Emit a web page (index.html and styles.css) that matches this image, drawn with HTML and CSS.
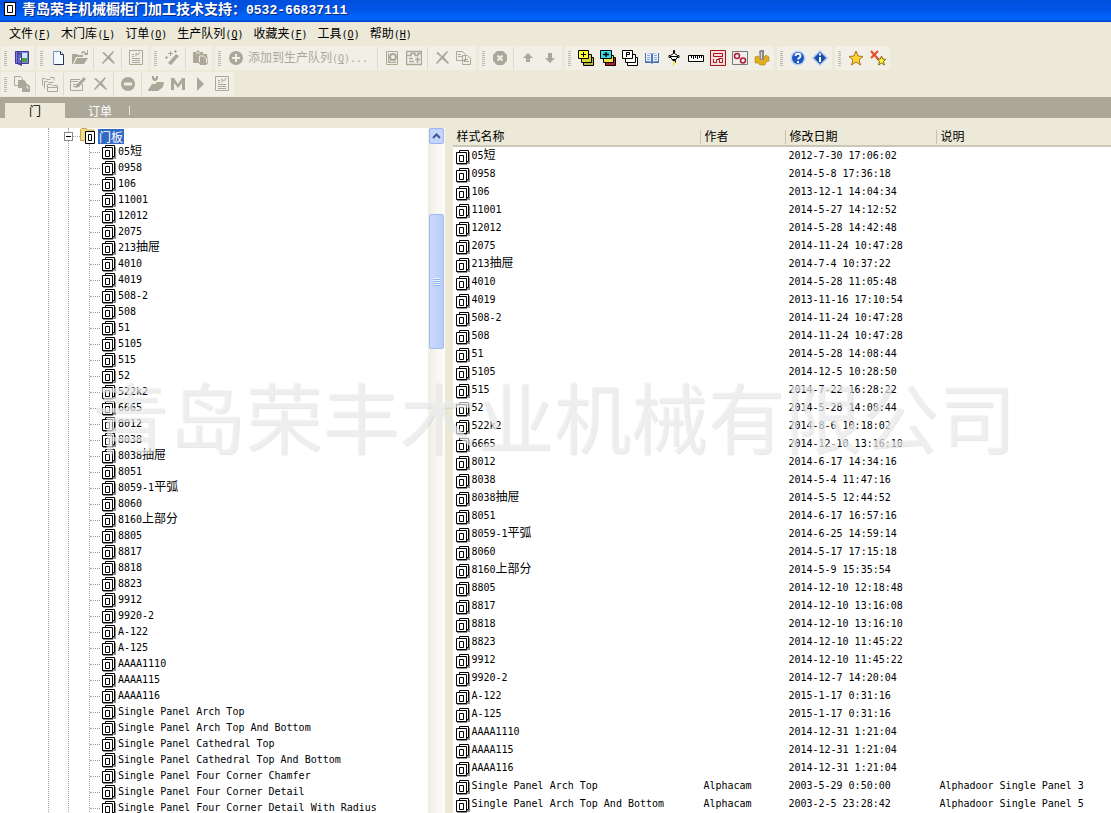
FILE: index.html
```html
<!DOCTYPE html>
<html lang="zh-CN">
<head>
<meta charset="utf-8">
<title>青岛荣丰机械橱柜门加工技术支持</title>
<link rel="stylesheet" href="styles.css">
</head>
<body>
<svg class="sprite" aria-hidden="true">
  <symbol id="panel" viewBox="0 0 14 16">
    <path d="M13 3h1v12h-3v1H1v-1h9v-2h3z" fill="#8c8c8c"/>
    <path d="M3.500 1.500h9v11h-9z" fill="#fff" stroke="#000"/>
    <path d="M.5 3.500h10v11H.500z" fill="#fff" stroke="#000"/><path d="M3.500 6.500h4v6h-4z" fill="#fff" stroke="#000"/>
  </symbol>
  <symbol id="folder" viewBox="0 0 16 16">
    <path d="M.5 12.500v-11l1-1h5l1 1.500h6.500v11z" fill="#f3dc8c" stroke="#c9a64c"/>
    <path d="M5.500 3.500h9v12h-9z" fill="#fff" stroke="#000"/><path d="M8.500 6.500h3v6h-3z" fill="#fff" stroke="#000"/>
  </symbol>
  <symbol id="exit" viewBox="0 0 16 16"><path d="M1.500 1.500h13v12h-13z" fill="#7f86d8" stroke="#3c3a96"/><path d="M8 3h5v9H8z" fill="#c9e8f8"/><path d="M8 8h5v4H8z" fill="#4da23a"/><path d="M3 2l5 1v13l-5-2z" fill="#4540a0"/><path d="M4 4l3 .5v9L4 12.500z" fill="#6a66c8"/><path d="M6 8h1v2H6z" fill="#fff"/></symbol>
  <symbol id="new" viewBox="0 0 16 16"><path d="M3.500 1.500h7l3 3v10h-10z" fill="#f5faff" stroke="#7090bd"/><path d="M10.500 1.500v3h3M13.500 5v9.500h-9" fill="none" stroke="#27364f"/></symbol>
  <symbol id="open" viewBox="0 0 16 16"><path d="M0 4h5l1 1h5v2H4l-3 7H0zM5 8h11l-4 6H2zM9 3c2-3 4-2 5 0h1V0h1v5h-4V4h1c-1-2-2-1-3 0z"/></symbol>
  <symbol id="del" viewBox="0 0 16 16"><path d="M2 3l2-1 4 4 5-5 1 1-4 5 5 6-1 1-6-5-5 5-1-1 5-6z"/></symbol>
  <symbol id="report" viewBox="0 0 16 16"><path d="M1.500.5h13v14h-13zM4 10.500h8M4 12.500h8M4 8.500h8M4 6.500h2M4 4.500h2M8 6.500V3l2 2 2-3" fill="none" stroke="#aca899"/></symbol>
  <symbol id="wand" viewBox="0 0 16 16"><path d="M12 4l3 2-8 9-3-2zM6 1h1v2h2v1H7v2H6V4H4V3h2zM11 0h1v1h1v1h-1v1h-1V2h-1V1h1zM2 6h1v1h1v1H3v1H2V8H1V7h1z"/></symbol>
  <symbol id="paste" viewBox="0 0 16 16"><path d="M1 2h3l2-2 2 2h3v2h4l1 9-2 2H8l-1-2H1z"/><path d="M4 3h4M7.500 12V6h4l3 3v4" fill="none" stroke="#f1efe4"/></symbol>
  <symbol id="add" viewBox="0 0 16 16"><circle cx="8" cy="8" r="7"/><path d="M8 4v8M4 8h8" stroke="#f1efe4" stroke-width="2"/></symbol>
  <symbol id="minus" viewBox="0 0 16 16"><circle cx="8" cy="8" r="7"/><path d="M4 8h8" stroke="#f1efe4" stroke-width="3"/></symbol>
  <symbol id="stop" viewBox="0 0 16 16"><path d="M5 1h6l4 4v6l-4 4H5l-4-4V5z"/><path d="M5.500 5.500l5 5M10.500 5.500l-5 5" stroke="#f1efe4" stroke-width="2"/></symbol>
  <symbol id="preview" viewBox="0 0 16 16"><path d="M2.500 1.500h11v13h-11zM4.500 3v9.500h7" fill="none" stroke="#aca899"/><circle cx="9" cy="7" r="3" fill="none" stroke="#aca899" stroke-width="2"/><path d="M5 12l3-3M10 10l2 3" stroke="#aca899"/></symbol>
  <symbol id="nest" viewBox="0 0 16 16"><path d="M.5 1.500h15v13H.500zM1 5.500h4v-2h4v2h3v-2h3M3 8.500h4M3 11.500h5M11.500 7v6M9 9.500h5" fill="none" stroke="#aca899" stroke-width="1.500"/></symbol>
  <symbol id="copy" viewBox="0 0 16 16"><path d="M.5 1.500h6l3 3v6h-9zM6.500 5.500h5l3 3v6h-8zM2 4.500h3M2 6.500h4M8 9.500h4M8 11.500h5" fill="none" stroke="#aca899"/></symbol>
  <symbol id="up" viewBox="0 0 16 16"><path d="M8 3l5 5h-3v4H6V8H3z"/></symbol>
  <symbol id="down" viewBox="0 0 16 16"><path d="M8 13l5-5h-3V3H6v5H3z"/></symbol>
  <symbol id="stack-y" viewBox="0 0 16 16"><g stroke="#000"><path d="M5.500 7.500h10v8h-10z" fill="#b5b13c"/><path d="M3.500 4.500h10v8h-10z" fill="#d8d43c"/><path d="M.5.5h10v8H.500z" fill="#ffff38"/><path d="M3 4.500h5M5.500 2v5"/></g></symbol>
  <symbol id="stack-c" viewBox="0 0 16 16"><g stroke="#000"><path d="M5.500 7.500h10v8h-10z" fill="#b52025"/><path d="M3.500 5.500h10v7h-10z" fill="#f5e53c"/><path d="M.5.5h11v8H.500z" fill="#35dce5"/><path d="M3 4.500h6M6 2v5" stroke-width="1.500"/></g></symbol>
  <symbol id="stack-w" viewBox="0 0 16 16"><g stroke="#000" fill="#fff"><path d="M5.500 7.500h10v8h-10z"/><path d="M3.500 4.500h10v8h-10z"/><path d="M.5.5h10v8H.500zM4.500 7V2.500h3v2h-3"/></g></symbol>
  <symbol id="book" viewBox="0 0 16 16"><path d="M1 3h6l1 1 1-1h6v10H9l-1 1-1-1H1z" fill="#4f73b0"/><path d="M2 3l5 .5v8L2 11zM14 3l-5 .5v8l5-.5z" fill="#e9f3ff"/><path d="M3 5.500h3M3 7.500h3M3 9.500h3M10 5.500h3M10 7.500h3M10 9.500h3" stroke="#8aa5cf"/></symbol>
  <symbol id="tool" viewBox="0 0 16 16"><path d="M7.500.5h1v3l3 2h1.500v2h-2l-1 2H6l-1-2H3v-2h1.500l3-2z" fill="#fff" stroke="#000"/><path d="M4 6.500h8" stroke="#000"/><path d="M6 10h4v2l-2 2v2H7v-3l2-1z" fill="#e6df00"/><path d="M6.500 10.500h3v2" fill="none" stroke="#000"/></symbol>
  <symbol id="ruler" viewBox="0 0 16 16"><path d="M.5 5.500h15v6H.500z" fill="#fff" stroke="#000"/><path d="M3.500 6v2M5.500 6v3M7.500 6v2M9.500 6v3M11.500 6v2M13.500 6v2" stroke="#000"/></symbol>
  <symbol id="maze" viewBox="0 0 16 16"><path d="M.5.5h15v15H.500zM3.500 3.500h9v3h-9zM3.500 9v3.500h3v-3h3v3h3v-4h-4" fill="#f8dddd" stroke="#a9141b"/></symbol>
  <symbol id="holes" viewBox="0 0 16 16"><path d="M.5 1.500h15v13H.500z" fill="#eee" stroke="#777"/><g fill="none" stroke="#b01c35" stroke-width="1.500"><circle cx="5" cy="6" r="2.500"/><circle cx="11" cy="10.500" r="2.500"/></g></symbol>
  <symbol id="spindle" viewBox="0 0 16 16"><path d="M1 7l3-1 2 1h4l2-2 3 2v4l-3 1-1 3H6l-2-2H1z" fill="#e4ae19" stroke="#9a7010" stroke-width=".5"/><path d="M5 1l2-1h3v10H6z" fill="#888"/><path d="M7 2h1v7H7z" fill="#ddd"/></symbol>
  <symbol id="help" viewBox="0 0 16 16"><circle cx="8" cy="8" r="7.500" fill="#bfd3f5"/><circle cx="8" cy="8" r="6" fill="#1f58bf"/><path d="M5.500 6c0-3 5-3 5 0 0 2-2 1.500-2.500 3.500M8 11v2" fill="none" stroke="#fff" stroke-width="1.800"/></symbol>
  <symbol id="info" viewBox="0 0 16 16"><path d="M8 0l8 8-8 8-8-8z" fill="#a8c4f0"/><path d="M8 2l6 6-6 6-6-6z" fill="#174da9"/><path d="M8 3.500v2M8 7v5" stroke="#fff" stroke-width="2"/></symbol>
  <symbol id="star" viewBox="0 0 16 16"><path d="M8 1l2 5 5 .5-4 3.500 1.500 5L8 12l-4.500 3L5 10 1 6.500 6 6z" fill="#ffd435" stroke="#a9751b"/></symbol>
  <symbol id="unstar" viewBox="0 0 16 16"><path d="M1 1l8 9M8 1L1 8" stroke="#e64a28" stroke-width="2"/><path d="M11.500 6l1.200 3 3 .3-2.200 2 .8 3.700-2.800-2-3 2 1-3.600-2.200-2.100 3-.3z" fill="#fff23a" stroke="#806510"/></symbol>
  <symbol id="sheets" viewBox="0 0 16 16"><path d="M.5.5h6l2 2v7h-8z" fill="none" stroke="#aca899"/><path d="M4 4h6l2 2v6H4z"/><path d="M8 7h4l4 3v6H8z"/><path d="M4 13l3 1M13 10v2h2" stroke="#f1efe4"/></symbol>
  <symbol id="folders" viewBox="0 0 16 16"><path d="M.5 9.500v-7h3l1 1h4M2.500 12.500v-7h3l1 1h5M5.500 8.500h4l1 1h5v6h-10zM6 11.500h9M8 1.500h4v3" fill="none" stroke="#aca899"/></symbol>
  <symbol id="edit" viewBox="0 0 16 16"><path d="M12.500 8v6.500H.500v-11H10M1 5.500h7M3 8.500h4M3 10.500h3" fill="none" stroke="#aca899"/><path d="M14 1l2 2-7 8-4 1 2-4z"/></symbol>
  <symbol id="mill" viewBox="0 0 16 16"><path d="M0 14l4-6h3l2-2h7l-1 5-5 4H0zM4 0h2v2h2V0h2v3L8 5H6L4 3z"/></symbol>
  <symbol id="macro" viewBox="0 0 16 16"><path d="M1 14V2h3l4 6 4-6h3v12h-3V7l-4 5-4-5v7z"/></symbol>
  <symbol id="play" viewBox="0 0 16 16"><path d="M5 1l7 7-7 7z"/></symbol>
</svg>

<div class="window">
  <header class="titlebar">
    <svg class="title-icon" viewBox="0 0 14 16" aria-hidden="true"><path d="M1 1h12v14H1z" fill="#000"/><path d="M2 2h10v12H2z" fill="#fff"/><path d="M4.500 4.500h5v7h-5z" fill="#fff" stroke="#000"/></svg>
    <h1>青岛荣丰机械橱柜门加工技术支持：<span class="phone">0532-66837111</span></h1>
  </header>

  <nav class="menubar">
    <button>文件<span class="key">(<u>F</u>)</span></button>
    <button>木门库<span class="key">(<u>L</u>)</span></button>
    <button>订单<span class="key">(<u>O</u>)</span></button>
    <button>生产队列<span class="key">(<u>Q</u>)</span></button>
    <button>收藏夹<span class="key">(<u>F</u>)</span></button>
    <button>工具<span class="key">(<u>O</u>)</span></button>
    <button>帮助<span class="key">(<u>H</u>)</span></button>
  </nav>

  <div class="toolbars">
    <div class="toolrow">
      <div class="group"><button aria-label="退出"><svg><use href="#exit"/></svg></button></div>
      <div class="group">
        <button aria-label="新建"><svg><use href="#new"/></svg></button><button aria-label="打开" disabled><svg><use href="#open"/></svg></button><i class="sep"></i>
        <button aria-label="删除" disabled><svg><use href="#del"/></svg></button><i class="sep"></i>
        <button aria-label="报告" disabled><svg><use href="#report"/></svg></button>
      </div>
      <div class="group"><button aria-label="向导" disabled><svg><use href="#wand"/></svg></button><i class="sep"></i><button aria-label="粘贴" disabled><svg><use href="#paste"/></svg></button></div>
      <div class="group">
        <button class="wide" disabled><svg><use href="#add"/></svg><span>添加到生产队列<span class="key">(<u>Q</u>)...</span></span></button><i class="sep"></i>
        <button aria-label="预览" disabled><svg><use href="#preview"/></svg></button><button aria-label="排版" disabled><svg><use href="#nest"/></svg></button><i class="sep"></i>
        <button aria-label="移除" disabled><svg><use href="#del"/></svg></button><button aria-label="复制" disabled><svg><use href="#copy"/></svg></button>
      </div>
      <div class="group">
        <button aria-label="停止" disabled><svg><use href="#stop"/></svg></button><i class="sep"></i>
        <button aria-label="上移" disabled><svg><use href="#up"/></svg></button><button aria-label="下移" disabled><svg><use href="#down"/></svg></button>
      </div>
      <div class="group">
        <button aria-label="新样式"><svg><use href="#stack-y"/></svg></button><button aria-label="添加样式"><svg><use href="#stack-c"/></svg></button><button aria-label="参数样式"><svg><use href="#stack-w"/></svg></button><button aria-label="目录"><svg><use href="#book"/></svg></button><button aria-label="刀具"><svg><use href="#tool"/></svg></button><button aria-label="尺寸"><svg><use href="#ruler"/></svg></button><button aria-label="路径"><svg><use href="#maze"/></svg></button><button aria-label="钻孔"><svg><use href="#holes"/></svg></button><button aria-label="主轴"><svg><use href="#spindle"/></svg></button>
      </div>
      <div class="group"><button aria-label="帮助"><svg><use href="#help"/></svg></button><button aria-label="关于"><svg><use href="#info"/></svg></button></div>
      <div class="group"><button aria-label="收藏"><svg><use href="#star"/></svg></button><button aria-label="取消收藏"><svg><use href="#unstar"/></svg></button></div>
    </div>
    <div class="toolrow">
      <div class="group">
        <button aria-label="复制样式" disabled><svg><use href="#sheets"/></svg></button><i class="sep"></i>
        <button aria-label="移动到文件夹" disabled><svg><use href="#folders"/></svg></button><i class="sep"></i>
        <button aria-label="编辑" disabled><svg><use href="#edit"/></svg></button><button aria-label="删除样式" disabled><svg><use href="#del"/></svg></button><i class="sep"></i>
        <button aria-label="排除" disabled><svg><use href="#minus"/></svg></button><i class="sep"></i>
        <button aria-label="加工" disabled><svg><use href="#mill"/></svg></button><button aria-label="宏" disabled><svg><use href="#macro"/></svg></button><button aria-label="运行" disabled><svg><use href="#play"/></svg></button><button aria-label="清单" disabled><svg><use href="#report"/></svg></button>
      </div>
    </div>
  </div>

  <div class="tabs" role="tablist">
    <button role="tab" aria-selected="true">门</button>
    <button role="tab" aria-selected="false">订单</button>
  </div>

  <main class="panes">
    <section class="tree-pane">
      <div class="tree">
        <div class="level">
          <div class="level inner">
            <div class="branch">
              <button class="toggle" aria-label="折叠"></button><i class="dots"></i>
              <svg class="folder"><use href="#folder"/></svg><span class="selected">门板</span>
            </div>
            <ul class="leaves" id="tree"></ul>
          </div>
        </div>
      </div>
      <div class="scrollbar">
        <button aria-label="向上滚动"><svg viewBox="0 0 9 6"><path d="M1 5l3.500-3.500L8 5" fill="none" stroke="#3a5a99" stroke-width="2"/></svg></button>
        <div class="track"><div class="thumb"></div></div>
      </div>
    </section>
    <section class="list-pane">
      <table>
        <colgroup><col class="c-name"><col class="c-author"><col class="c-date"><col></colgroup>
        <thead><tr><th>样式名称</th><th>作者</th><th>修改日期</th><th>说明</th></tr></thead>
        <tbody id="list"></tbody>
      </table>
    </section>
  </main>
  <div class="watermark">青岛荣丰木业机械有限公司</div>
</div>
<script src="app.js"></script>
</body>
</html>
```

FILE: styles.css
```css
* { box-sizing: border-box; }

body {
  margin: 0;
  background: #ece9d8;
  color: #000;
  font: 12px/16px "Noto Sans CJK SC", sans-serif;
}

button {
  margin: 0;
  padding: 0;
  border: 0;
  background: none;
  color: inherit;
  font: inherit;
}

.sprite { display: none; }

.window {
  position: relative;
  display: flex;
  flex-direction: column;
  height: 100vh;
  overflow: hidden;
}

td,
.mono,
.key {
  font-family: "DejaVu Sans Mono", monospace;
  font-size: 10px;
}

.cjk {
  font-family: "Noto Sans CJK SC", sans-serif;
  font-size: 12px;
  line-height: 0;
}

/* Title and menu */

.titlebar {
  display: flex;
  flex: none;
  align-items: center;
  gap: 5px;
  height: 22px;
  padding: 0 3px 4px;
  background: linear-gradient(#0050dc, #0054e6 45%, #0066ff 80%, #0060f4 90%, #0038b8);
  color: #fff;
}

.title-icon { width: 14px; height: 16px; }

h1 {
  margin: 0;
  font-size: 14px;
  line-height: 18px;
  text-shadow: 1px 1px #0a2a80;
  white-space: nowrap;
}

.phone {
  font-family: "Liberation Mono", monospace;
  font-size: 13px;
}

.menubar {
  display: flex;
  flex: none;
  gap: 10px;
  height: 24px;
  padding: 0 9px;
  white-space: nowrap;
}

/* Toolbars */

.toolbars {
  display: flex;
  flex: none;
  flex-direction: column;
  gap: 2px;
  padding-bottom: 1px;
}

.toolrow {
  display: flex;
  gap: 3px;
  padding-left: 1px;
}

.group {
  display: flex;
  align-items: center;
  height: 24px;
  padding-right: 1px;
  border-radius: 2px;
  background: #f2f0e6;
}

.group::before {
  width: 3px;
  height: 15px;
  margin: 0 4px 0 3px;
  background: repeating-linear-gradient(#bdb9aa 0 1px, #f2f0e6 1px 2px);
  content: "";
}

.group button {
  display: flex;
  flex: none;
  align-items: center;
  justify-content: center;
  width: 22px;
  height: 22px;
}

.group svg { flex: none; width: 16px; height: 16px; }
.group button:disabled { color: #aca899; fill: #aca899; }

.group .wide {
  justify-content: flex-start;
  gap: 4px;
  width: 150px;
  padding-left: 3px;
  white-space: nowrap;
}

.sep {
  flex: none;
  width: 1px;
  height: 22px;
  margin: 0 3px 0 2px;
  background: #dcd9cc;
}

/* Tabs */

.tabs {
  display: flex;
  flex: none;
  height: 31px;
  padding: 6px 5px 0;
  border-bottom: 10px solid #ece9d8;
  background: #aca899;
}

.tabs button {
  position: relative;
  width: 60px;
  color: #fff;
  line-height: 15px;
}

.tabs button[aria-selected="true"] { background: #ece9d8; color: #000; }

.tabs button:last-child { width: 70px; }

.tabs button:last-child::after {
  position: absolute;
  top: 3px;
  right: 5px;
  width: 1px;
  height: 9px;
  background: #ece9d8;
  content: "";
}

/* Panes */

.panes {
  display: flex;
  flex: 1;
  gap: 8px;
  min-height: 0;
}

.tree-pane {
  display: flex;
  flex: 0 0 calc(40% + 1px);
  background: #fff;
  overflow: hidden;
}

.tree { flex: 1; min-width: 0; }

.level {
  margin-left: 48px;
  border-left: 1px dotted #a0a0a0;
}

.level.inner { margin-left: 19px; }

.branch {
  display: flex;
  align-items: center;
  height: 16px;
}

.toggle {
  width: 9px;
  height: 9px;
  margin-left: -5px;
  border: 1px solid #8a8a8a;
  background: linear-gradient(#000, #000) center / 5px 1px no-repeat #fff;
}

.dots {
  width: 7px;
  height: 1px;
  border-top: 1px dotted #a0a0a0;
}

.folder { width: 16px; height: 16px; margin-right: 2px; }

.selected {
  padding: 0 1px;
  background: #316ac5;
  color: #fff;
  line-height: 15px;
}

.leaves {
  margin: 0 0 0 20px;
  padding: 0;
  border-left: 1px dotted #a0a0a0;
  list-style: none;
}

.leaves li {
  display: flex;
  align-items: center;
  height: 16px;
  line-height: 14px;
  white-space: nowrap;
}

.leaves li::before {
  width: 10px;
  margin-right: 2px;
  border-top: 1px dotted #a0a0a0;
  content: "";
}

.doc {
  flex: none;
  width: 14px;
  height: 16px;
  margin-right: 2px;
}

.scrollbar {
  display: flex;
  flex: none;
  flex-direction: column;
  width: 17px;
  padding: 0 1px;
  background: linear-gradient(90deg, #f0eee4, #fdfdfa);
}

.scrollbar button {
  display: grid;
  place-items: center;
  height: 16px;
  border: 1px solid #9db5ec;
  border-radius: 2px;
  background: #c5d5fc;
}

.scrollbar svg { width: 9px; height: 6px; }

.track { flex: 1; padding-top: 70px; }

.thumb {
  display: grid;
  height: 135px;
  border: 1px solid #a4b9ee;
  border-radius: 2px;
  background: linear-gradient(90deg, #cad9fe, #b9cbf8);
}

.thumb::after {
  place-self: center;
  width: 7px;
  height: 8px;
  background: repeating-linear-gradient(#eef4fe 0 1px, #8cb0f8 1px 2px);
  content: "";
}

.list-pane {
  flex: 1;
  min-width: 0;
  background: #fff;
  overflow: hidden;
}

table {
  width: 100%;
  border-spacing: 0;
  table-layout: fixed;
}

.c-name { width: 248px; }
.c-author { width: 85px; }
.c-date { width: 151px; }

th {
  height: 19px;
  padding: 0 3px 1px;
  border-bottom: 2px solid #cbc7b8;
  background: linear-gradient(#c5c2b2, #c5c2b2) right 0 top 2px / 1px 14px no-repeat #ece9d8;
  font-weight: normal;
  line-height: 16px;
  text-align: left;
}

th:last-child { background: #ece9d8; }

td {
  height: 18px;
  padding: 0 2px;
  line-height: 18px;
  white-space: nowrap;
  vertical-align: top;
}

td:first-child { padding: 0 3px; }

td div { display: flex; height: 18px; }
td .doc { margin: 2px 1px 0 0; }

/* Overlay mark */

.watermark {
  position: absolute;
  top: 367px;
  right: 4px;
  left: 0;
  color: rgba(241, 241, 241, .65);
  font-size: 77px;
  line-height: 96px;
  text-align: center;
  text-shadow: 1px 1px 1px rgba(120, 120, 120, .18);
  white-space: nowrap;
  pointer-events: none;
}
```

FILE: app.js
```js
const styles = [
  ["05短", "", "2012-7-30 17:06:02"],
  ["0958", "", "2014-5-8 17:36:18"],
  ["106", "", "2013-12-1 14:04:34"],
  ["11001", "", "2014-5-27 14:12:52"],
  ["12012", "", "2014-5-28 14:42:48"],
  ["2075", "", "2014-11-24 10:47:28"],
  ["213抽屉", "", "2014-7-4 10:37:22"],
  ["4010", "", "2014-5-28 11:05:48"],
  ["4019", "", "2013-11-16 17:10:54"],
  ["508-2", "", "2014-11-24 10:47:28"],
  ["508", "", "2014-11-24 10:47:28"],
  ["51", "", "2014-5-28 14:08:44"],
  ["5105", "", "2014-12-5 10:28:50"],
  ["515", "", "2014-7-22 16:28:22"],
  ["52", "", "2014-5-28 14:08:44"],
  ["522k2", "", "2014-8-6 10:18:02"],
  ["6665", "", "2014-12-10 13:16:10"],
  ["8012", "", "2014-6-17 14:34:16"],
  ["8038", "", "2014-5-4 11:47:16"],
  ["8038抽屉", "", "2014-5-5 12:44:52"],
  ["8051", "", "2014-6-17 16:57:16"],
  ["8059-1平弧", "", "2014-6-25 14:59:14"],
  ["8060", "", "2014-5-17 17:15:18"],
  ["8160上部分", "", "2014-5-9 15:35:54"],
  ["8805", "", "2014-12-10 12:18:48"],
  ["8817", "", "2014-12-10 13:16:08"],
  ["8818", "", "2014-12-10 13:16:10"],
  ["8823", "", "2014-12-10 11:45:22"],
  ["9912", "", "2014-12-10 11:45:22"],
  ["9920-2", "", "2014-12-7 14:20:04"],
  ["A-122", "", "2015-1-17 0:31:16"],
  ["A-125", "", "2015-1-17 0:31:16"],
  ["AAAA1110", "", "2014-12-31 1:21:04"],
  ["AAAA115", "", "2014-12-31 1:21:04"],
  ["AAAA116", "", "2014-12-31 1:21:04"],
  ["Single Panel Arch Top", "Alphacam", "2003-5-29 0:50:00", "Alphadoor Single Panel 3"],
  ["Single Panel Arch Top And Bottom", "Alphacam", "2003-2-5 23:28:42", "Alphadoor Single Panel 5"]
];

const moreNames = [
  "Single Panel Cathedral Top",
  "Single Panel Cathedral Top And Bottom",
  "Single Panel Four Corner Chamfer",
  "Single Panel Four Corner Detail",
  "Single Panel Four Corner Detail With Radius"
];

const icon = '<svg class="doc" aria-hidden="true"><use href="#panel"/></svg>';

// Chinese runs are set one size larger than the fixed-width Latin text.
const text = (s = "") =>
  `<span class="mono">${s.replace(/[\u4e00-\u9fff]+/g, '<span class="cjk">$&</span>')}</span>`;

document.getElementById("tree").innerHTML =
  [...styles.map(s => s[0]), ...moreNames].map(n => `<li>${icon}${text(n)}</li>`).join("");

document.getElementById("list").innerHTML = styles.map(([name, author, date, note]) =>
  `<tr><td><div>${icon}${text(name)}</div></td><td>${text(author)}</td><td>${text(date)}</td><td>${text(note)}</td></tr>`
).join("");
```
